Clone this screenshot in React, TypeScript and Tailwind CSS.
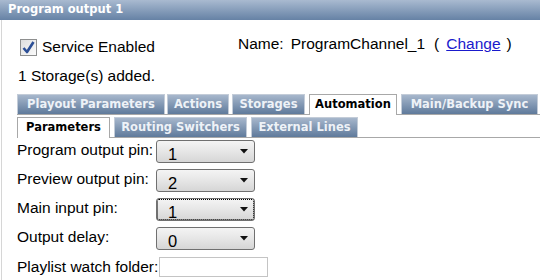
import React from 'react';

const arial = { fontFamily: '"Liberation Sans", Arial, sans-serif' };
const verdana = { fontFamily: '"DejaVu Sans", Verdana, sans-serif' };

const topTabs = [
  { label: 'Playout Parameters', cls: 'w-[148px] ml-0' },
  { label: 'Actions', cls: 'w-[62px] ml-[2px]' },
  { label: 'Storages', cls: 'w-[73px] ml-[3px]' },
  { label: 'Automation', cls: 'w-[88px] ml-[4px]', active: true },
  { label: 'Main/Backup Sync', cls: 'w-[137px] ml-[4px]' },
];

const subTabs = [
  { label: 'Parameters', cls: 'w-[93px] ml-0', active: true },
  { label: 'Routing Switchers', cls: 'w-[133px] ml-[4px]' },
  { label: 'External Lines', cls: 'w-[107px] ml-[4px]' },
];

function Tab({ label, cls, active }: { label: string; cls: string; active?: boolean }) {
  if (active) {
    return (
      <div
        className={`${cls} h-[21px] -mb-px flex items-center justify-center bg-white border border-b-0 border-[#a8a8a8] text-black text-[11.5px] font-bold`}
        style={verdana}
      >
        {label}
      </div>
    );
  }
  return (
    <div
      className={`${cls} h-[20px] flex items-center justify-center bg-gradient-to-b from-[#a7b7cc] to-[#5f7a9b] border border-b-0 border-[#c3ccd8] text-[#eef2f7] text-[11.5px] font-bold`}
      style={verdana}
    >
      {label}
    </div>
  );
}

function Select({ value, focused }: { value: string; focused?: boolean }) {
  return (
    <div
      className={`w-[99px] h-[23px] rounded-[3px] border border-[#707070] bg-gradient-to-b from-[#f4f4f4] via-[#e6e6e6] to-[#d6d6d6] flex items-center justify-between pl-[11px] pr-[6px] ${
        focused ? 'outline-1 outline-dotted outline-black -outline-offset-2' : ''
      }`}
    >
      <span className="text-[16.5px] leading-none pt-[5px] text-black" style={arial}>
        {value}
      </span>
      <svg width="8" height="5" viewBox="0 0 8 5">
        <path d="M0 0 L8 0 L4 4.5 Z" fill="#111" />
      </svg>
    </div>
  );
}

function Checkbox() {
  return (
    <div className="w-[17px] h-[17px] border border-[#8e8f8f] bg-gradient-to-br from-[#dedede] to-[#fbfbfb] flex items-center justify-center">
      <svg width="15" height="15" viewBox="0 0 15 15">
        <path d="M2.5 8 L6 12 L12.5 2" fill="none" stroke="#2c4f96" strokeWidth="2.6" strokeLinejoin="round" />
      </svg>
    </div>
  );
}

const rows = [
  { label: 'Program output pin:', value: '1' },
  { label: 'Preview output pin:', value: '2' },
  { label: 'Main input pin:', value: '1', focused: true },
  { label: 'Output delay:', value: '0' },
];

export default function App() {
  return (
    <div className="w-[540px] h-[280px] bg-white overflow-hidden text-black" style={arial}>
      <div
        className="h-[20px] bg-gradient-to-b from-[#a9bad0] to-[#6682a5] text-white text-[11.5px] font-bold flex items-center pl-[8px]"
        style={verdana}
      >
        Program output 1
      </div>
      <div className="ml-[1px] border-l border-[#d6d6d6] h-[260px]">
        <div className="flex items-start pt-[15px]">
          <div className="flex items-center pl-[18px] pt-[3px] w-[236px]">
            <Checkbox />
            <span className="ml-[5px] text-[15.5px] leading-[18px]">Service Enabled</span>
          </div>
          <div className="flex items-center text-[15.5px] leading-[18px]">
            <span>Name:</span>
            <span className="ml-[7px]">ProgramChannel_1</span>
            <span className="ml-[9px]">(</span>
            <span className="ml-[7px] text-[#1a1acc] underline">Change</span>
            <span className="ml-[6px]">)</span>
          </div>
        </div>
        <div className="pl-[16px] mt-[11px] text-[15.5px] leading-[18px]">1 Storage(s) added.</div>

        <div className="ml-[15px] mt-[9px] flex items-end border-b border-[#a8a8a8]">
          {topTabs.map((t) => (
            <Tab key={t.label} {...t} />
          ))}
        </div>
        <div className="ml-[15px] mt-[2px] flex items-end border-b border-[#a8a8a8]">
          {subTabs.map((t) => (
            <Tab key={t.label} {...t} />
          ))}
        </div>

        <div className="pl-[15px] pt-[2px] flex flex-col gap-[6px]">
          {rows.map((r) => (
            <div key={r.label} className="flex items-center">
              <div className="w-[139px] text-[15.5px] leading-[18px] -mt-[3px]">{r.label}</div>
              <Select value={r.value} focused={r.focused} />
            </div>
          ))}
          <div className="flex items-center">
            <div className="w-[139px] text-[15.5px] leading-[18px] whitespace-nowrap">Playlist watch folder:</div>
            <div className="ml-[3px] mt-[1px] w-[109px] h-[20px] border border-[#c4c4c4] bg-white" />
          </div>
        </div>
      </div>
    </div>
  );
}
